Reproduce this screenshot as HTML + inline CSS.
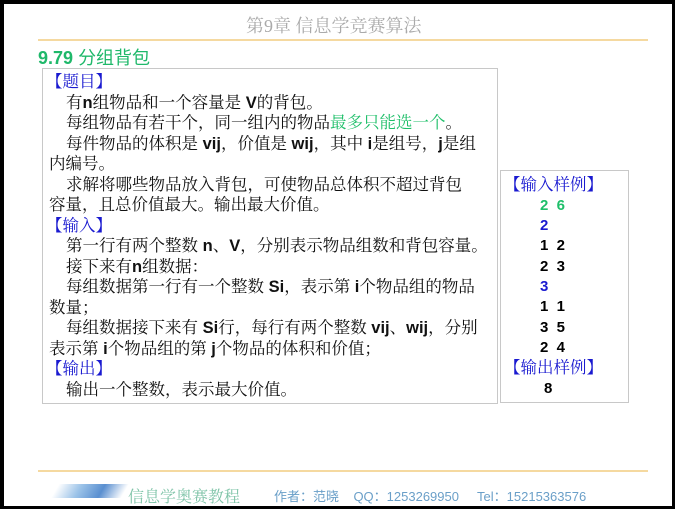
<!DOCTYPE html>
<html><head><meta charset="utf-8"><style>
*{margin:0;padding:0;box-sizing:border-box}
body{width:675px;height:509px;background:#000;position:relative;overflow:hidden;font-family:"Liberation Sans","Noto Sans CJK SC",sans-serif}
#pg{position:absolute;left:4px;top:4px;width:668px;height:502px;background:#fff}
.a{position:absolute;white-space:nowrap}
.box{position:absolute;border:1px solid #c8c8c8}
.t{position:absolute;white-space:nowrap;font-size:16.5px;line-height:20.5px;color:#111;font-family:"Liberation Sans","Noto Serif CJK SC",serif}
.t div{padding-left:3px}
.t div.i{padding-left:20px}
.t div.h{padding-left:0}
.bl{color:#1a1ad0}.gr{color:#1fbf6a}
b{font-family:"Liberation Sans",sans-serif}
.r{position:absolute;font-size:15px;font-weight:bold;font-family:"Liberation Sans",sans-serif;left:540px}
</style></head><body><div id="pg"></div>
<div class="a" style="left:246px;top:12px;font-size:18px;color:#aaa;font-family:'Liberation Serif','Noto Serif CJK SC',serif">第9章 信息学竞赛算法</div>
<div class="a" style="left:38px;top:39px;width:610px;height:2px;background:#f5d9a0"></div>
<div class="a" style="left:38px;top:44px;font-size:18px;color:#1fb86a"><b>9.79</b> <span style="font-family:'Noto Sans CJK SC',sans-serif">分组背包</span></div>
<div class="box" style="left:42px;top:68px;width:456px;height:336px"></div>
<div class="t" style="left:46px;top:72px">
<div class="h bl">【题目】</div>
<div class="i">有<b>n</b>组物品和一个容量是 <b>V</b>的背包。</div>
<div class="i">每组物品有若干个，同一组内的物品<span class="gr">最多只能选一个</span>。</div>
<div class="i">每件物品的体积是 <b>vij</b>，价值是 <b>wij</b>，其中 <b>i</b>是组号，<b>j</b>是组</div>
<div>内编号。</div>
<div class="i">求解将哪些物品放入背包，可使物品总体积不超过背包</div>
<div>容量，且总价值最大。输出最大价值。</div>
<div class="h bl">【输入】</div>
<div class="i">第一行有两个整数 <b>n</b>、<b>V</b>，分别表示物品组数和背包容量。</div>
<div class="i">接下来有<b>n</b>组数据：</div>
<div class="i">每组数据第一行有一个整数 <b>Si</b>，表示第 <b>i</b>个物品组的物品</div>
<div>数量；</div>
<div class="i">每组数据接下来有 <b>Si</b>行，每行有两个整数 <b>vij</b>、<b>wij</b>，分别</div>
<div>表示第 <b>i</b>个物品组的第 <b>j</b>个物品的体积和价值；</div>
<div class="h bl">【输出】</div>
<div class="i">输出一个整数，表示最大价值。</div>
</div>
<div class="box" style="left:500px;top:170px;width:129px;height:233px"></div>
<div class="t bl" style="left:504px;top:175px">【输入样例】</div>
<div class="r gr" style="top:197px">2&nbsp;&nbsp;6</div>
<div class="r bl" style="top:217px">2</div>
<div class="r" style="top:237px">1&nbsp;&nbsp;2</div>
<div class="r" style="top:258px">2&nbsp;&nbsp;3</div>
<div class="r bl" style="top:278px">3</div>
<div class="r" style="top:298px">1&nbsp;&nbsp;1</div>
<div class="r" style="top:319px">3&nbsp;&nbsp;5</div>
<div class="r" style="top:339px">2&nbsp;&nbsp;4</div>
<div class="t bl" style="left:504px;top:358px">【输出样例】</div>
<div class="r" style="top:380px;left:544px">8</div>
<div class="a" style="left:38px;top:470px;width:610px;height:2px;background:#f5d9a0"></div>
<div class="a" style="left:55px;top:484px;width:70px;height:14px;background:linear-gradient(90deg,#fff,#9cc3e8,#5a8fd0,#fff);transform:skewX(-30deg)"></div>
<div class="a" style="left:128px;top:484px;font-size:16px;color:#7fc4a8;font-family:'Noto Serif CJK SC',serif">信息学奥赛教程</div>
<div class="a" style="left:274px;top:486px;font-size:13px;color:#6a9fc8">作者：范晓&nbsp;&nbsp;&nbsp;&nbsp;QQ：1253269950&nbsp;&nbsp;&nbsp;&nbsp;&nbsp;Tel：15215363576</div>
</body></html>
